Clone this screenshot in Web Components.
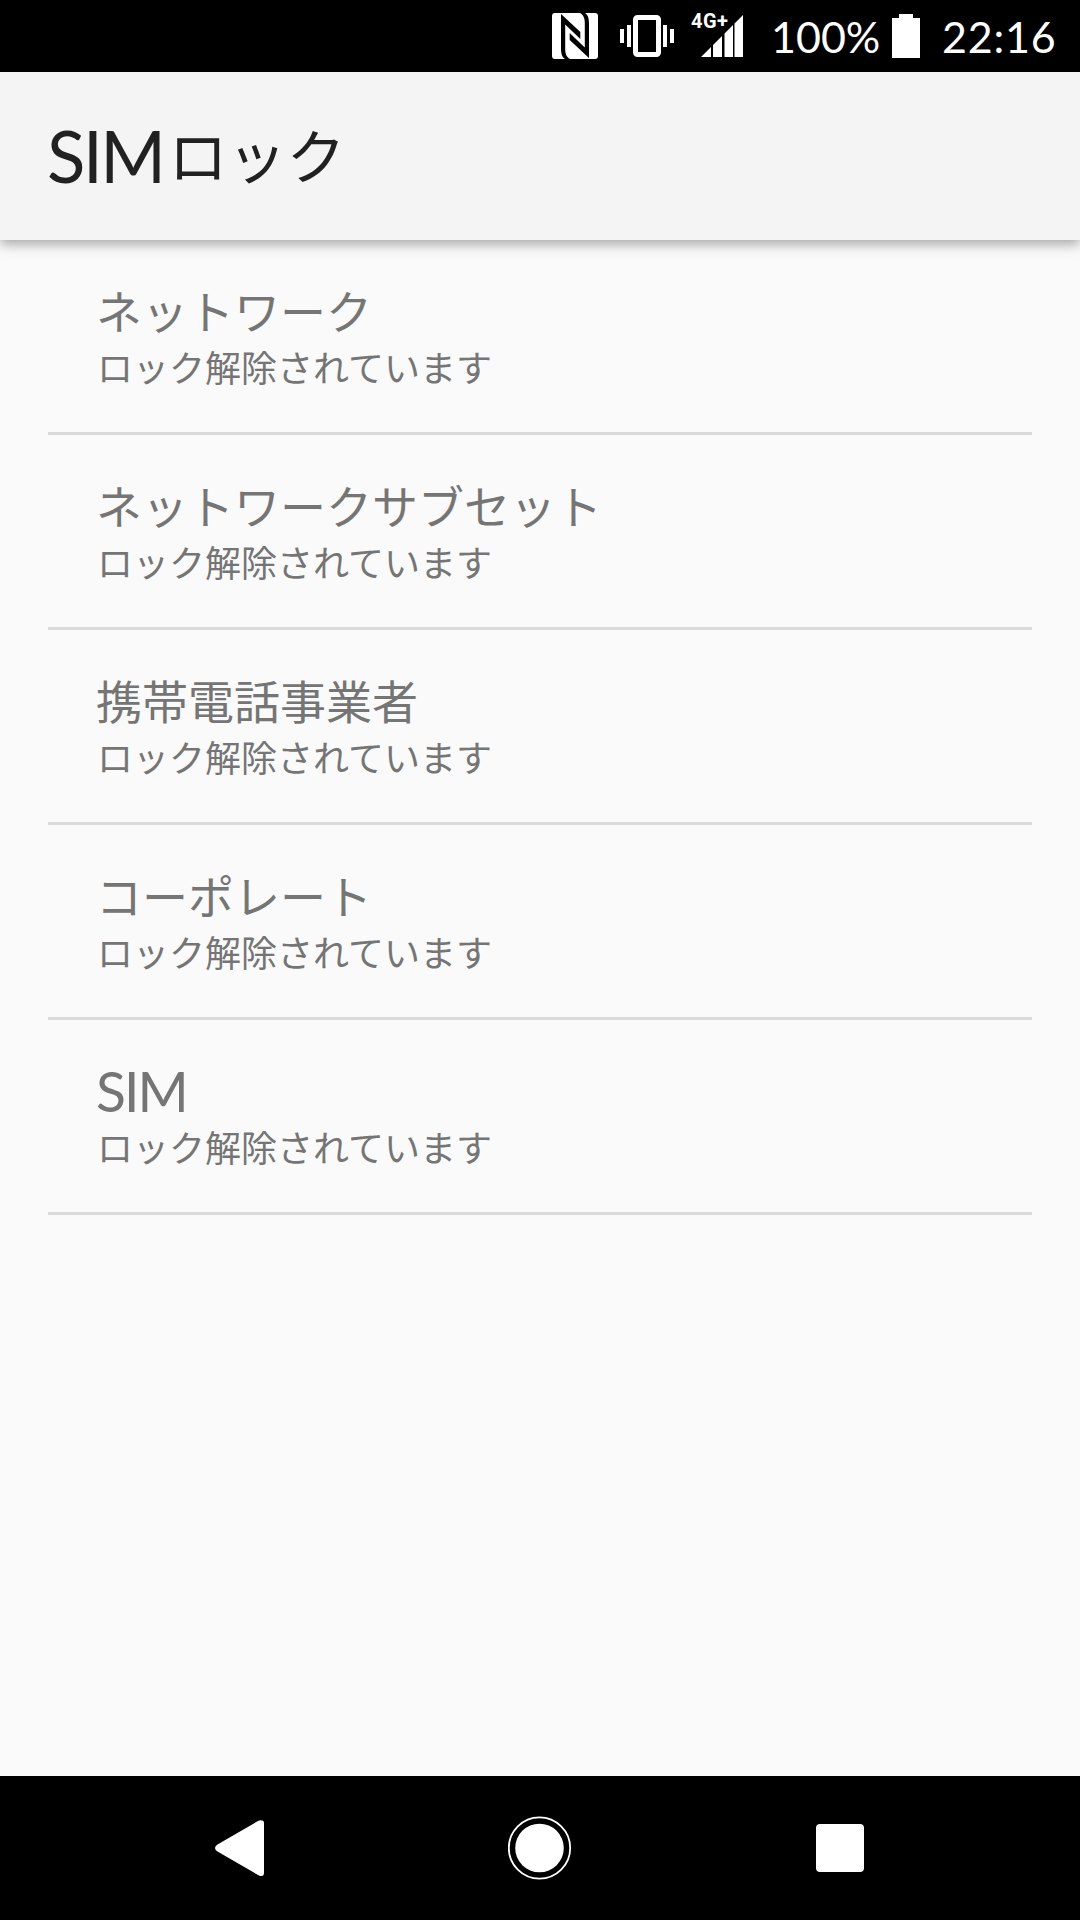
<!DOCTYPE html>
<html lang="ja">
<head>
<meta charset="utf-8">
<title>SIMロック</title>
<style>
  html, body {
    height: 100%;
    margin: 0;
  }

  body {
    background: #fafafa;
    font-family: "Noto Sans CJK JP", "Noto Sans", sans-serif;
  }
</style>
</head>
<body>
<sim-lock-screen></sim-lock-screen>

<script>
  class StatusBar extends HTMLElement {
    constructor() {
      super();

      this.root = this.attachShadow({ mode: 'open' });
    }

    connectedCallback() {
      this.root.innerHTML = `
        <svg class="nfc" width="46" height="46" viewBox="0 0 46 46">
          <rect width="46" height="46" rx="3"/>
          <g fill="#000">
            <path d="M9 1L28.300 19V26L13.200 11.500V36C13.200 41 14.500 44 18 46H13C10 44 9 41 9 35z"/>
            <path d="M37 45L17.700 27V20L32.800 34.500V10C32.800 5 31.500 2 28 0H33C36 2 37 5 37 11z"/>
          </g>
        </svg>
        <svg class="vibrate" width="54" height="42" viewBox="0 0 54 42">
          <path d="M0 14h4v14H0zM7 10h4v22H7zM43 10h4v22h-4zM50 14h4v14h-4z"/>
          <rect x="15.500" y="2.500" width="23" height="37" rx="2" fill="none" stroke="#fff" stroke-width="5"/>
        </svg>
        <svg class="signal" width="54" height="58" viewBox="0 -6 54 58">
          <text x="0" y="15.500">4G+</text>
          <path d="M10 45L20 35V45zM22 33L31 24V45H22zM33.500 21.500L42 13V45H33.500zM43.500 11.500L52 3V45H43.500z"/>
        </svg>
        <span class="level"><slot name="level"></slot></span>
        <svg class="battery" width="28" height="44" viewBox="0 0 28 44">
          <path d="M7 0H21V4H28V44H0V4H7z"/>
        </svg>
        <span class="clock"><slot name="clock"></slot></span>

        <style>
          :host {
            align-items: center;
            background: #000;
            box-sizing: border-box;
            color: #fff;
            display: flex;
            flex: 0 0 72px;
            font: 43px/70px Lato, sans-serif;
            justify-content: flex-end;
            padding-right: 23px;
          }

          svg {
            display: block;
            fill: #fff;
            flex: none;
          }

          .nfc {
            margin-right: 22px;
          }

          .vibrate {
            margin-right: 17px;
          }

          .signal {
            margin-bottom: 2px;
            margin-right: 26px;
          }

          .signal text {
            font: 700 20px Roboto, sans-serif;
            letter-spacing: 0.5px;
          }

          .level,
          .clock {
            padding-top: 2px;
            white-space: nowrap;
          }

          .level {
            width: 109px;
          }

          .battery {
            margin-left: 12px;
            margin-right: 22px;
          }

          .clock {
            letter-spacing: 0.8px;
            width: 115px;
          }
        </style>
      `;
    }
  }

  class AppBar extends HTMLElement {
    constructor() {
      super();

      this.root = this.attachShadow({ mode: 'open' });
    }

    connectedCallback() {
      this.root.innerHTML = `
        <h1><slot></slot></h1>

        <style>
          :host {
            align-items: center;
            background: #f4f4f4;
            box-shadow: 0 4px 12px rgba(0, 0, 0, 0.35);
            box-sizing: border-box;
            color: #212121;
            display: flex;
            flex: 0 0 168px;
            padding: 0 47px 4px;
            position: relative;
          }

          h1 {
            font-size: 59px;
            font-weight: 400;
            line-height: 80px;
            margin: 0;
          }
        </style>
      `;
    }
  }

  // Latin capitals stand as tall as the kana next to them
  class LatinText extends HTMLElement {
    constructor() {
      super();

      this.root = this.attachShadow({ mode: 'open' });
    }

    connectedCallback() {
      // no whitespace around the slot, it would show up in the line
      this.root.innerHTML = `<style>
        :host {
          display: inline;
          font-family: Lato, sans-serif;
          font-size: 1.2em;
          letter-spacing: -0.035em;
          line-height: 0;
          margin-right: 0.07em;
          vertical-align: -0.05em;
        }
      </style><slot></slot>`;
    }
  }

  class LockItem extends HTMLElement {
    constructor() {
      super();

      this.root = this.attachShadow({ mode: 'open' });
    }

    connectedCallback() {
      this.root.innerHTML = `
        <div class="title"><slot></slot></div>
        <div class="summary"><slot name="summary"></slot></div>

        <style>
          :host {
            border-bottom: 3px solid #dadada;
            box-sizing: border-box;
            color: #757575;
            display: flex;
            flex-direction: column;
            gap: 9px;
            height: 195px;
            padding: 42px 48px 0;
          }

          .title {
            font-size: 46px;
            line-height: 54px;
          }

          .summary {
            font-size: 36px;
            line-height: 42px;
            padding-left: 1px;
          }
        </style>
      `;
    }
  }

  class NavBar extends HTMLElement {
    constructor() {
      super();

      this.root = this.attachShadow({ mode: 'open' });
    }

    connectedCallback() {
      this.root.innerHTML = `
        <svg width="64" height="64" viewBox="0 0 64 64">
          <path d="M53.500 4.500Q56 4 56 7.500V56.500Q56 60 53.500 60Q52 60.300 50 59L9.500 35.500Q7 34 7 32Q7 30 9.500 28.500L50 5Q52 4 53.500 4.500z"/>
        </svg>
        <svg width="64" height="64" viewBox="0 0 64 64">
          <circle cx="31.500" cy="32" r="30.700" fill="none" stroke="#fff" stroke-width="1.800"/>
          <circle cx="31.500" cy="32" r="24.300"/>
        </svg>
        <svg width="64" height="64" viewBox="0 0 64 64">
          <rect x="8" y="8" width="48" height="48" rx="4"/>
        </svg>

        <style>
          :host {
            align-items: center;
            background: #000;
            box-sizing: border-box;
            display: grid;
            flex: 0 0 144px;
            grid-template-columns: repeat(3, 1fr);
            justify-items: center;
            padding: 0 90px;
          }

          svg {
            display: block;
            fill: #fff;
          }
        </style>
      `;
    }
  }

  class SimLockScreen extends HTMLElement {
    constructor() {
      super();

      this.root = this.attachShadow({ mode: 'open' });
    }

    connectedCallback() {
      const titles = [
        'ネットワーク',
        'ネットワークサブセット',
        '携帯電話事業者',
        'コーポレート',
        '<latin-text>SIM</latin-text>',
      ];

      this.root.innerHTML = `
        <status-bar>
          <span slot="level">100%</span>
          <span slot="clock">22:16</span>
        </status-bar>
        <app-bar><latin-text>SIM</latin-text>ロック</app-bar>
        <main>
          ${titles.map(title => `
            <lock-item>${title}<span slot="summary">ロック解除されています</span></lock-item>
          `).join('')}
        </main>
        <nav-bar></nav-bar>

        <style>
          :host {
            background: #fafafa;
            display: flex;
            flex-direction: column;
            height: 1920px;
            overflow: hidden;
            width: 1080px;
          }

          main {
            flex: 1;
            padding: 0 48px;
          }
        </style>
      `;
    }
  }

  customElements.define('status-bar', StatusBar);
  customElements.define('app-bar', AppBar);
  customElements.define('latin-text', LatinText);
  customElements.define('lock-item', LockItem);
  customElements.define('nav-bar', NavBar);
  customElements.define('sim-lock-screen', SimLockScreen);
</script>
</body>
</html>
